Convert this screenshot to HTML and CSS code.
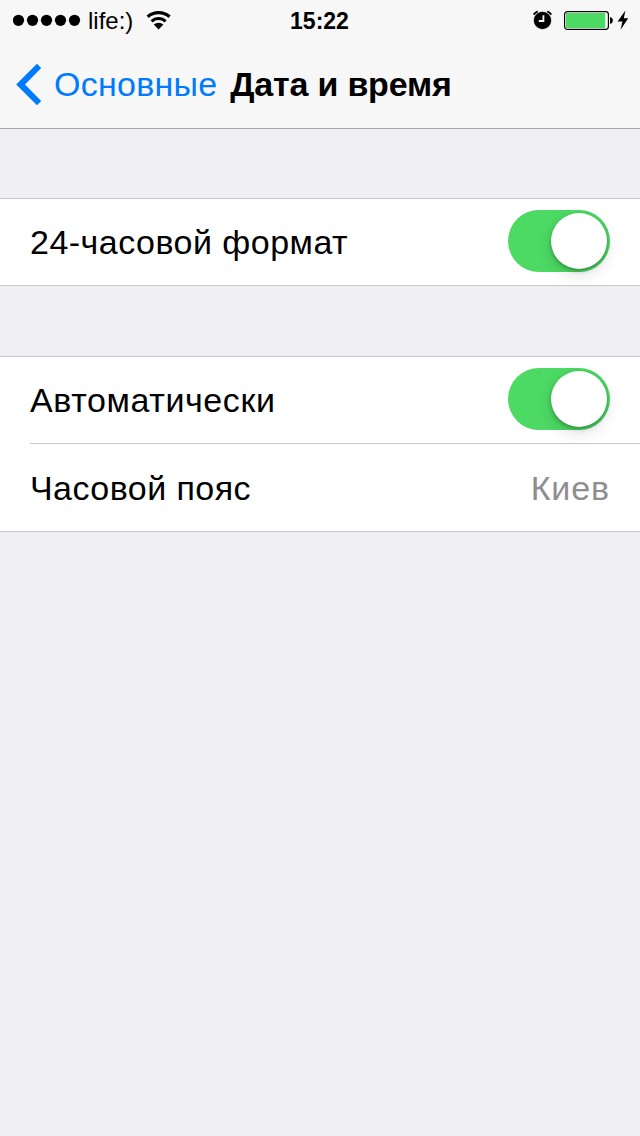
FILE: index.html
```html
<!DOCTYPE html>
<html lang="ru">
<head>
    <meta charset="UTF-8">
    <meta name="viewport" content="width=device-width, initial-scale=1.0">
    <title>Дата и время</title>
    <link rel="stylesheet" href="styles.css">
</head>
<body>
    <header class="header">
        <div class="status-bar">
            <div class="status-left">
                <svg class="signal" width="68" height="12" viewBox="0 0 68 12">
                    <circle cx="5.5" cy="6.3" r="5.6"/>
                    <circle cx="19.5" cy="6.3" r="5.6"/>
                    <circle cx="33.5" cy="6.3" r="5.6"/>
                    <circle cx="47.5" cy="6.3" r="5.6"/>
                    <circle cx="61.5" cy="6.3" r="5.6"/>
                </svg>
                <span class="carrier">life:)</span>
                <svg class="wifi" width="26" height="20" viewBox="0 0 26 20">
                    <path d="M1.6 6.7A16.8 16.8 0 0 1 23.6 6.7" fill="none" stroke="#000" stroke-width="3.3"/>
                    <path d="M5.6 11.4A9.8 9.8 0 0 1 19.6 11.4" fill="none" stroke="#000" stroke-width="3"/>
                    <path d="M12.6 19.4L7.8 14.6A7.2 7.2 0 0 1 17.4 14.6Z"/>
                </svg>
            </div>
            <span class="time">15:22</span>
            <div class="status-right">
                <svg class="alarm" width="20" height="20" viewBox="0 0 20 20">
                    <path d="M0.8 4.6A10.5 10.5 0 0 1 4.8 1.4M14.2 1.4A10.5 10.5 0 0 1 18.2 4.6" fill="none" stroke="#000" stroke-width="2.2"/>
                    <circle cx="9.5" cy="10.4" r="9.1" stroke="#f7f7f7" stroke-width="0.8"/>
                    <path d="M10.4 5.2V11H5.8" fill="none" stroke="#f7f7f7" stroke-width="1.8"/>
                </svg>
                <svg class="battery" width="50" height="20" viewBox="0 0 50 20">
                    <rect x="0.6" y="1.6" width="43.8" height="17.8" rx="2.8" fill="#fff" stroke="#000" stroke-width="1.2"/>
                    <rect x="2" y="3" width="39.3" height="15" fill="#4cd964"/>
                    <path d="M46 7.2C49.8 7.2 49.8 13.8 46 13.8Z"/>
                </svg>
                <svg class="bolt" width="12" height="20" viewBox="0 0 12 20">
                    <path d="M8.4 0.4L0.6 11.4H5.4L3.6 19.8L11.2 8.2H6.8Z"/>
                </svg>
            </div>
        </div>
        <nav class="nav-bar">
            <a class="back">
                <svg width="26" height="43" viewBox="0 0 26 43">
                    <path d="M0.2 21.5L21 0.8L25.2 5L9 21.5L25.2 38L21 42.2Z" fill="#007aff"/>
                </svg>
                <span class="back-label">Основные</span>
            </a>
            <h1 class="title">Дата и время</h1>
        </nav>
    </header>

    <main class="settings">
        <section class="group">
            <div class="row">
                <span class="label label-format">24-часовой формат</span>
                <span class="switch"><span class="knob"></span></span>
            </div>
        </section>
        <section class="group">
            <div class="row">
                <span class="label label-auto">Автоматически</span>
                <span class="switch"><span class="knob"></span></span>
            </div>
            <div class="row row-zone">
                <span class="label label-zone">Часовой пояс</span>
                <span class="value">Киев</span>
            </div>
        </section>
    </main>
</body>
</html>
```
FILE: styles.css
```css
* {
    box-sizing: border-box;
}

body {
    margin: 0;
    min-height: 100vh;
    background: #efeff4;
    color: #000;
    font-family: "Liberation Sans", Arial, sans-serif;
    font-size: 34px;
}

svg {
    display: block;
    flex: none;
}

.header {
    background: #f7f7f7;
    border-bottom: 1px solid #a7a7aa;
}

.status-bar {
    display: grid;
    grid-template-columns: 1fr auto 1fr;
    align-items: center;
    height: 40px;
    padding: 0 11px 0 13px;
    font-size: 24px;
    line-height: 38px;
}

.status-left,
.status-right {
    display: flex;
    align-items: center;
}

.status-right {
    justify-content: flex-end;
}

.carrier {
    margin-left: 7px;
    padding-top: 2px;
}

.wifi {
    margin-left: 13px;
}

.time {
    padding: 2px 3px 0 0;
    font-size: 23px;
    font-weight: bold;
}

.battery {
    margin-left: 11px;
}

.bolt {
    margin-left: 3px;
}

.nav-bar {
    display: flex;
    align-items: center;
    height: 88px;
    padding-left: 16px;
    white-space: nowrap;
}

.back {
    display: flex;
    align-items: center;
    color: #007aff;
}

.back-label {
    margin-left: 12px;
    letter-spacing: 0.25px;
}

.title {
    margin: 0 0 0 13px;
    font-size: 34px;
    font-weight: bold;
    letter-spacing: -0.2px;
}

.settings {
    display: flex;
    flex-direction: column;
    gap: 70px;
    padding-top: 69px;
}

.group {
    background: #fff;
    border-top: 1px solid #c8c7cc;
    border-bottom: 1px solid #c8c7cc;
}

.row {
    display: flex;
    align-items: center;
    justify-content: space-between;
    height: 86px;
    margin-left: 30px;
    padding-right: 30px;
}

.row-zone {
    height: 88px;
    padding-top: 2px;
    border-top: 1px solid #c8c7cc;
}

.label-format {
    letter-spacing: 0.48px;
}

.label-auto {
    letter-spacing: 0.6px;
}

.label-zone {
    letter-spacing: 0.45px;
}

.value {
    color: #8e8e8e;
    letter-spacing: 0.9px;
}

.switch {
    display: flex;
    justify-content: flex-end;
    width: 102px;
    height: 62px;
    margin-bottom: 2px;
    padding: 3px;
    border-radius: 31px;
    background: #4cd964;
}

.knob {
    width: 56px;
    height: 56px;
    border-radius: 50%;
    background: #fff;
    box-shadow: 0 6px 16px rgba(0, 0, 0, 0.12), 0 2px 4px rgba(0, 0, 0, 0.28);
}
```
